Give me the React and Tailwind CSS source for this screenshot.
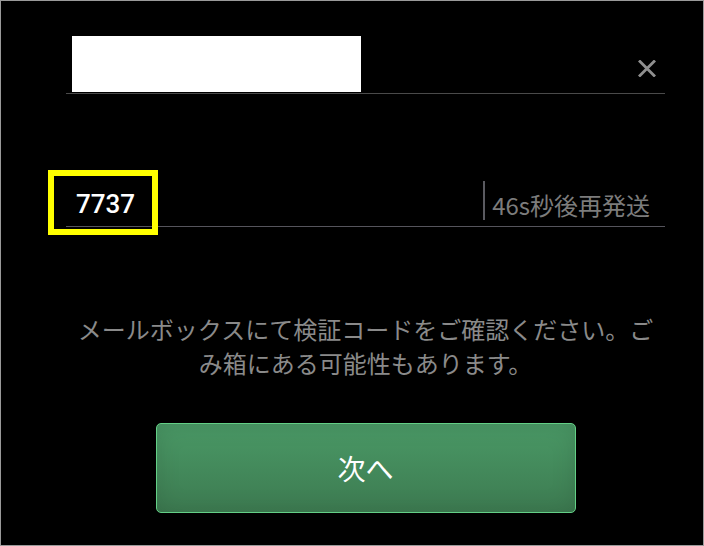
import React from "react";

const jp = { fontFamily: '"Noto Sans CJK JP", "Noto Sans", sans-serif' };

function CloseIcon() {
  return (
    <svg width="18" height="17" viewBox="0 0 18 17" className="mb-[15px] mr-[9px]">
      <path d="M1 0.5 L17 16.5 M17 0.5 L1 16.5" stroke="#8f8f8f" strokeWidth="2.8" fill="none" />
    </svg>
  );
}

export default function App() {
  return (
    <div className="relative h-[546px] w-[704px] overflow-hidden border border-[#9a9a9a] bg-black" style={jp}>
      <div className="pl-[65px] pr-[38px] pt-[35px]">
        {/* header */}
        <div className="flex items-end justify-between border-b border-[#4a4a4a] pb-[1px] pl-[6px]">
          <div className="h-[56px] w-[289px] bg-white" />
          <CloseIcon />
        </div>

        {/* code row */}
        <div className="flex h-[133px] items-end border-b border-[#55545c]">
          <span
            className="mb-[9px] pl-[10px] text-[26px] font-medium leading-[26px] text-white"
            style={{ fontFamily: 'Roboto, "Liberation Sans", sans-serif' }}
          >
            7737
          </span>
          <div className="ml-auto flex items-end pr-[15px]">
            <div className="mb-[6px] h-[39px] w-[2px] bg-[#5a5a60]" />
            <span className="mb-[9px] ml-[7px] text-[24px] leading-[24px] text-[#7c7c7c]">46s秒後再発送</span>
          </div>
        </div>

        {/* message */}
        <p className="mx-auto mt-[85px] w-[580px] text-center text-[24px] leading-[34px] text-[#8a8a8a]">
          メールボックスにて検証コードをご確認ください。ごみ箱にある可能性もあります。
        </p>

        <button
          type="button"
          className="mx-auto mt-[43px] flex h-[90px] w-[420px] items-center justify-center rounded-[5px] border border-[#63cf86] bg-gradient-to-b from-[#4a9966] to-[#3d7b51] text-[28px] text-white shadow-[inset_0_0_24px_rgba(0,0,0,0.12)]"
          style={jp}
        >
          次へ
        </button>
      </div>

      {/* annotation overlay */}
      <div className="absolute left-[47px] top-[169px] h-[65px] w-[110px] border-[6px] border-[#ffff00]" />
    </div>
  );
}
